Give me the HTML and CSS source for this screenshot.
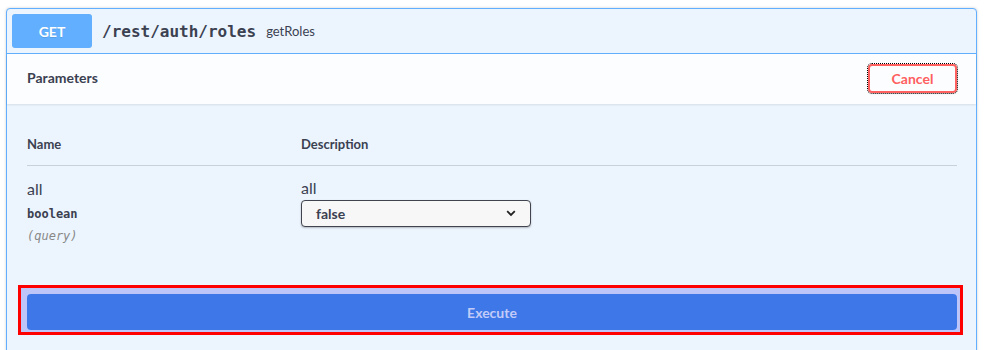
FILE: index.html
```html
<!DOCTYPE html>
<html>
<head>
<meta charset="utf-8">
<link rel="stylesheet" href="styles.css">
</head>
<body>
<div class="opblock">
  <div class="summary">
    <span class="method">GET</span>
    <span class="path">/rest/auth/roles</span>
    <span class="desc">getRoles</span>
  </div>
  <div class="section-header">
    <h4 class="title">Parameters</h4>
    <button class="btn-cancel">Cancel</button>
  </div>
  <div class="params">
    <div class="param-table">
      <div class="thead">
        <div class="col-name">Name</div>
        <div class="col-desc">Description</div>
      </div>
      <div class="row">
        <div class="col-name">
          <div class="param-name">all</div>
          <div class="param-type">boolean</div>
          <div class="param-in">(query)</div>
        </div>
        <div class="col-desc">
          <div class="param-md">all</div>
          <div class="select">
            <span class="select-value">false</span>
            <svg class="chevron" width="10" height="7" viewBox="0 0 10 7"><polyline points="1.2,1.2 5,5 8.8,1.2" fill="none" stroke="#222" stroke-width="1.8"/></svg>
          </div>
        </div>
      </div>
    </div>
  </div>
  <div class="execute-wrapper">
    <div class="highlight">
      <button class="btn-execute">Execute</button>
    </div>
  </div>
</div>
</body>
</html>
```

FILE: styles.css
```css
* { box-sizing: border-box; }
body {
  margin: 0;
  background: #fff;
  font-family: Lato, "Open Sans", sans-serif;
  color: #3b4151;
}
.opblock {
  margin: 8px 8px 0 6px;
  border: 1px solid #61affe;
  border-radius: 4px;
  background: #ecf5fe;
  box-shadow: 0 0 3px rgba(0,0,0,.19);
  height: 360px;
}
.summary {
  display: flex;
  align-items: center;
  padding: 5px;
  border-bottom: 1px solid #61affe;
  height: 45px;
}
.method {
  width: 80px;
  height: 34px;
  border-radius: 3px;
  background: #61affe;
  color: #fff;
  font-weight: 700;
  font-size: 14px;
  display: flex;
  align-items: center;
  justify-content: center;
  text-shadow: 0 1px 0 rgba(0,0,0,.1);
}
.path {
  padding: 0 10px;
  font-family: "DejaVu Sans Mono", monospace;
  font-weight: 700;
  font-size: 16px;
  color: #3b4151;
}
.desc {
  font-size: 13px;
  color: #3b4151;
}
.section-header {
  display: flex;
  align-items: center;
  justify-content: space-between;
  height: 50px;
  padding: 0 19px 0 20px;
  background: rgba(255,255,255,.8);
  box-shadow: 0 1px 2px rgba(0,0,0,.1);
}
.title {
  margin: 0 0 3px;
  font-size: 14px;
  font-weight: 700;
}
.btn-cancel {
  font-family: Lato, sans-serif;
  font-size: 14px;
  font-weight: 700;
  color: #ff6060;
  background: transparent;
  border: 2px solid #ff6060;
  border-radius: 4px;
  width: 89px;
  height: 29px;
  padding: 0;
  margin-bottom: 1px;
  outline: 1px dotted #000;
  box-shadow: 0 1px 2px rgba(0,0,0,.1);
}
.params {
  padding: 20px 19px 0 20px;
}
.thead {
  display: flex;
  height: 42px;
  align-items: center;
  padding-bottom: 2px;
  border-bottom: 1px solid rgba(59,65,81,.2);
  font-size: 13px;
  font-weight: 700;
}
.col-name { width: 274px; }
.col-desc { flex: 1; }
.row {
  display: flex;
  padding-top: 13px;
}
.param-name {
  font-size: 16px;
  line-height: 20px;
}
.param-type {
  font-family: "DejaVu Sans Mono", monospace;
  font-size: 12px;
  font-weight: 700;
  line-height: 16px;
  margin-top: 7px;
}
.param-in {
  font-family: "DejaVu Sans Mono", monospace;
  font-size: 12px;
  font-style: italic;
  color: #888;
  line-height: 16px;
  margin-top: 6px;
}
.param-md {
  font-size: 16px;
  line-height: 18px;
}
.select {
  margin-top: 3px;
  width: 230px;
  height: 27px;
  border: 1px solid #41444e;
  border-radius: 4px;
  background: #f7f7f7;
  box-shadow: 0 1px 2px rgba(0,0,0,.25);
  display: flex;
  align-items: center;
  justify-content: space-between;
  padding: 0 14px 0 14px;
}
.select-value {
  font-size: 14px;
  font-weight: 700;
}
.execute-wrapper {
  padding: 41px 13px 0 11px;
}
.highlight {
  border: 3px solid #ff0000;
  background: #bec5f8;
  padding: 6px 3px 2px 6px;
}
.btn-execute {
  display: block;
  width: 100%;
  height: 36px;
  border: none;
  border-radius: 4px;
  background: #3d77e8;
  color: #c2cbf8;
  font-family: Lato, sans-serif;
  font-size: 14px;
  font-weight: 700;
}
```
